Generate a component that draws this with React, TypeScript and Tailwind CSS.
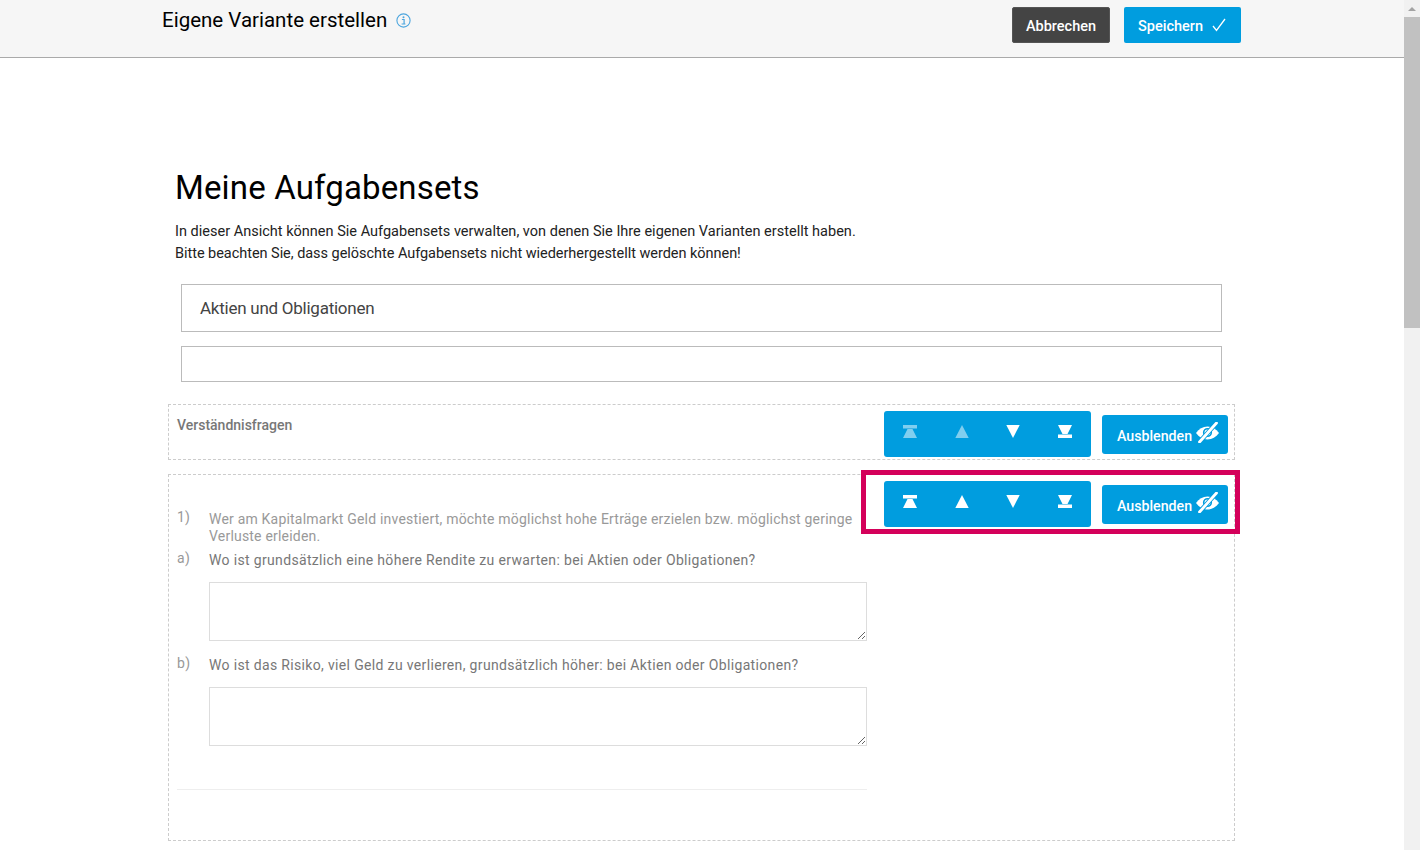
const font = { fontFamily: 'Roboto, "Liberation Sans", sans-serif' };

function InfoIcon() {
  return (
    <svg width="15" height="15" viewBox="0 0 15 15" fill="none" className="text-[#4da6de]">
      <circle cx="7.5" cy="7.5" r="6.6" stroke="currentColor" strokeWidth="1.1" />
      <circle cx="7.5" cy="4.2" r="1" fill="currentColor" />
      <path d="M5.9 6.5h2.2v4.3M5.6 11h3.800" stroke="currentColor" strokeWidth="1.200" />
    </svg>
  );
}

function MoveIcon({ kind, faded }: { kind: 'top' | 'up' | 'down' | 'bottom'; faded?: boolean }) {
  const paths = {
    top: 'M0 0h14v3.400H0z M4.500 4H9.500L14 13H0z',
    up: 'M7 0L13.700 13H.3z',
    down: 'M.3 0h13.400L7 13z',
    bottom: 'M0 0h14L9.500 9H4.500z M0 9.600h14V13H0z',
  };
  return (
    <svg width="14" height="13" viewBox="0 0 14 13" className={faded ? 'opacity-50' : ''}>
      <path d={paths[kind]} fill="white" />
    </svg>
  );
}

function EyeOffIcon() {
  return (
    <svg width="23" height="21" viewBox="0 0 23 21" fill="none">
      <path d="M0 11c3-4.200 6.800-6.500 11.500-6.500S20 6.800 23 11c-3 4.200-6.800 6.500-11.500 6.500S3 15.200 0 11z" fill="white" />
      <circle cx="11.500" cy="10.500" r="3.800" stroke="#009ddf" strokeWidth="1.600" />
      <path d="M3.500 20L20.500 1" stroke="#009ddf" strokeWidth="4.600" />
      <path d="M3.500 20L20.500 1" stroke="white" strokeWidth="2.800" strokeLinecap="round" />
    </svg>
  );
}

function Controls({ fadedUp }: { fadedUp?: boolean }) {
  return (
    <div className="flex items-start gap-[11px]">
      <div className="flex h-[46px] w-[207px] rounded-[3px] bg-[#009ddf] pl-[19px] pt-[14px]">
        <div className="flex w-[51.5px]"><MoveIcon kind="top" faded={fadedUp} /></div>
        <div className="flex w-[51.5px]"><MoveIcon kind="up" faded={fadedUp} /></div>
        <div className="flex w-[52px]"><MoveIcon kind="down" /></div>
        <div className="flex"><MoveIcon kind="bottom" /></div>
      </div>
      <button className="mt-1 flex h-[39px] w-[126px] items-center rounded-[3px] bg-[#009ddf] pl-[15px] pt-[5px] text-[14.2px] font-medium text-white">
        Ausblenden
        <span className="ml-[4px] -mt-[10px]"><EyeOffIcon /></span>
      </button>
    </div>
  );
}

function Question({ label, text }: { label: string; text: string }) {
  return (
    <div>
      <div className="flex text-[14px] leading-[17px] tracking-[0.34px] text-[#777777]">
        <span className="w-8 -translate-y-[2px] text-[#999999]">{label}</span>
        <span className="flex-1">{text}</span>
      </div>
      <textarea className="mt-[13px] ml-8 block h-[59px] w-[658px] border border-[#dddddd] bg-white" />
    </div>
  );
}

export default function App() {
  return (
    <div className="flex h-[850px] w-[1420px] overflow-hidden bg-white text-black" style={font}>
      <div className="w-[1404px]">
        <header className="flex h-[58px] justify-between border-b border-[#aaaaaa] bg-[#f6f6f6] pl-[162px] pr-[163px]">
          <div className="flex items-center gap-[9px] self-start pt-[7px]">
            <h2 className="text-[20.5px] leading-[26px]">Eigene Variante erstellen</h2>
            <InfoIcon />
          </div>
          <div className="flex gap-[14px] pt-[7px]">
            <button className="h-9 w-[98px] rounded-[2px] border border-[#555555] bg-[#444444] pt-[3px] text-[14.5px] font-medium text-white">Abbrechen</button>
            <button className="flex h-9 w-[117px] items-center gap-[9px] rounded-[2px] bg-[#009ddf] pl-[14px] pt-[3px] text-[14.5px] font-medium text-white">
              Speichern
              <svg width="14" height="14" viewBox="0 0 14 14" fill="none" className="-mt-[3px]">
                <path d="M1 8l3.500 4.500L13 1" stroke="white" strokeWidth="1.300" />
              </svg>
            </button>
          </div>
        </header>

        <main className="pl-[168px]">
          <div className="pl-[7px] pt-[108px]">
            <h1 className="text-[33px] leading-[44px] tracking-[0.15px]">Meine Aufgabensets</h1>
            <p className="mt-[11px] text-[14.5px] leading-[22px] tracking-[0.01px] text-[#222222]">
              In dieser Ansicht können Sie Aufgabensets verwalten, von denen Sie Ihre eigenen Varianten erstellt haben.
              <br />
              <span className="tracking-[-0.04px]">Bitte beachten Sie, dass gelöschte Aufgabensets nicht wiederhergestellt werden können!</span>
            </p>
          </div>

          <div className="ml-[13px] mt-[19px] flex h-12 w-[1041px] items-center border border-[#bbbbbb] pl-[18px] pt-[1px] text-[17px] tracking-[-0.25px] text-[#444444]">
            Aktien und Obligationen
          </div>
          <div className="ml-[13px] mt-[14px] h-9 w-[1041px] border border-[#bbbbbb]" />

          <section className="mt-[22px] flex h-[56px] w-[1067px] justify-between border border-dashed border-[#cccccc] pl-2 pr-[6px] pt-[6px]">
            <span className="mt-[6px] text-[14px] font-medium leading-[17px] text-[#777777]">Verständnisfragen</span>
            <Controls fadedUp />
          </section>

          <section className="relative mt-[14px] flex h-[367px] w-[1067px] justify-between border border-dashed border-[#cccccc] pl-2 pr-[6px] pt-[6px]">
            <div className="w-[690px] pt-[30px]">
              <div className="flex text-[14px] leading-[17px] tracking-[0.2px] text-[#999999]">
                <span className="w-8 -translate-y-[2px]">1)</span>
                <span className="flex-1">
                  Wer am Kapitalmarkt Geld investiert, möchte möglichst hohe Erträge erzielen bzw. möglichst geringe Verluste erleiden.
                </span>
              </div>
              <div className="mt-[7px]">
                <Question label="a)" text="Wo ist grundsätzlich eine höhere Rendite zu erwarten: bei Aktien oder Obligationen?" />
              </div>
              <div className="mt-[16px]">
                <Question label="b)" text="Wo ist das Risiko, viel Geld zu verlieren, grundsätzlich höher: bei Aktien oder Obligationen?" />
              </div>
              <hr className="mt-[43px] border-[#eeeeee]" />
            </div>
            <Controls />
            <div className="absolute -top-[5px] right-[-6px] h-[64px] w-[379px] border-[5px] border-[#d4005a]" />
          </section>
        </main>
      </div>

      <div className="w-4 bg-[#f1f1f1]">
        <div className="flex h-[17px] items-center justify-center">
          <div className="h-0 w-0 border-x-4 border-b-4 border-x-transparent border-b-[#a3a3a3]" />
        </div>
        <div className="h-[311px] bg-[#c1c1c1]" />
      </div>
    </div>
  );
}
